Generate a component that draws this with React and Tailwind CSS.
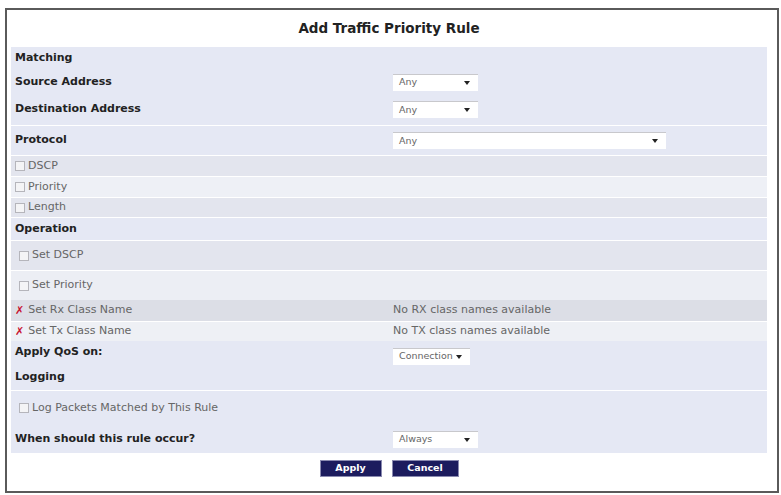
import React from 'react';

const font = { fontFamily: '"DejaVu Sans", Verdana, sans-serif' };

function Select({ value, width }) {
    return (
        <div
            className={`flex items-center justify-between h-[17px] bg-white border-t border-[#c8c8cc] pl-[6px] pr-[8px] ${width}`}
        >
            <span className="text-[9.5px] text-[#666]">{value}</span>
            <span className="w-0 h-0 border-l-[3px] border-r-[3px] border-t-[4px] border-l-transparent border-r-transparent border-t-[#222]" />
        </div>
    );
}

function Box() {
    return <span className="inline-block w-[10px] h-[10px] border border-[#b5b5bb] bg-[#f4f4f6] mr-[3px]" />;
}

function Mark() {
    return <span className="text-[#c8102e] font-bold text-[11px] mr-[4px] leading-none">✗</span>;
}

function Row({ h, bg = '', line = false, label, bold, children, pad = 'pl-[4px]' }) {
    return (
        <div className={`flex items-center ${h} ${bg} ${line ? 'border-t border-white' : ''}`}>
            <div className={`w-[382px] flex items-center ${pad} ${bold ? 'font-bold text-[11px] text-[#222]' : 'text-[11px] text-[#666]'}`}>
                {label}
            </div>
            <div className="flex items-center">{children}</div>
        </div>
    );
}

export default function App() {
    return (
        <div className="w-[781px] h-[495px] bg-white pt-[8px] pl-[5px] pr-[2px]" style={font}>
            <div className="h-[485px] border-2 border-[#5a5a5a] pl-[4px] pr-[10px] flex flex-col">
                <div className="h-[37px] flex items-center justify-center font-bold text-[13.5px] text-[#222]">
                    Add Traffic Priority Rule
                </div>
                <div className="bg-[#e5e8f4] flex flex-col">
                    <Row h="h-[23px]" label="Matching" bold />
                    <Row h="h-[24px]" label="Source Address" bold>
                        <Select value="Any" width="w-[85px]" />
                    </Row>
                    <Row h="h-[31px]" label="Destination Address" bold>
                        <Select value="Any" width="w-[85px]" />
                    </Row>
                    <Row h="h-[30px]" line label="Protocol" bold>
                        <Select value="Any" width="w-[273px]" />
                    </Row>
                    <Row h="h-[21px]" line bg="bg-[#e3e5ee]" label={<><Box />DSCP</>} />
                    <Row h="h-[21px]" line bg="bg-[#eef0f6]" label={<><Box />Priority</>} />
                    <Row h="h-[20px]" line bg="bg-[#e3e5ee]" label={<><Box />Length</>} />
                    <Row h="h-[23px]" line label="Operation" bold />
                    <Row h="h-[30px]" line bg="bg-[#e3e5ee]" pad="pl-[8px]" label={<><Box />Set DSCP</>} />
                    <Row h="h-[30px]" line bg="bg-[#eceef4]" pad="pl-[8px]" label={<><Box />Set Priority</>} />
                    <Row h="h-[21px]" bg="bg-[#dcdee6]" label={<><Mark />Set Rx Class Name</>}>
                        <span className="text-[11px] text-[#666]">No RX class names available</span>
                    </Row>
                    <Row h="h-[20px]" line bg="bg-[#eef0f5]" label={<><Mark />Set Tx Class Name</>}>
                        <span className="text-[11px] text-[#666]">No TX class names available</span>
                    </Row>
                    <div className="flex h-[24px] items-center">
                        <div className="w-[382px] pl-[4px] pb-[2px] font-bold text-[11px] text-[#222]">Apply QoS on:</div>
                        <div className="pt-[6px]">
                            <Select value="Connection" width="w-[77px]" />
                        </div>
                    </div>
                    <Row h="h-[25px]" label="Logging" bold />
                    <Row h="h-[35px]" line pad="pl-[8px]" label={<><Box />Log Packets Matched by This Rule</>} />
                    <Row h="h-[28px]" label="When should this rule occur?" bold>
                        <Select value="Always" width="w-[85px]" />
                    </Row>
                </div>
                <div className="flex justify-center gap-[10px] pt-[7px]">
                    <button className="w-[62px] h-[17px] bg-[#1c1c5e] border border-[#8a8ab0] text-white text-[9.5px] font-bold">
                        Apply
                    </button>
                    <button className="w-[67px] h-[17px] bg-[#1c1c5e] border border-[#8a8ab0] text-white text-[9.5px] font-bold">
                        Cancel
                    </button>
                </div>
            </div>
        </div>
    );
}
